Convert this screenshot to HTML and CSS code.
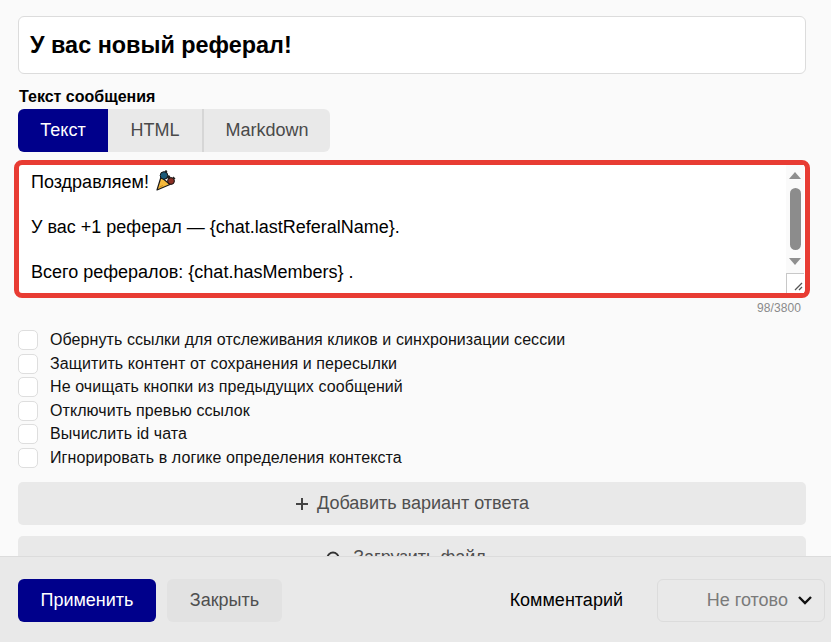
FILE: index.html
```html
<!DOCTYPE html>
<html>
<head>
    <title>Сообщение</title>
    <link rel="stylesheet" href="styles.css">
</head>
<body>
    <div class="page">
        <div class="content">
            <div class="title-box">У вас новый реферал!</div>

            <div class="field-label">Текст сообщения</div>
            <div class="tabs">
                <a href="#" class="tab tab-active">Текст</a>
                <a href="#" class="tab tab-html">HTML</a>
                <a href="#" class="tab tab-md">Markdown</a>
            </div>

            <div class="editor">
                <div class="editor-text">
                    <p>Поздравляем! <svg class="emoji" width="22" height="22" viewBox="0 0 22 22"><path d="M3 20 L7 7 L16 14.500 Z" fill="#f5b93c" stroke="#1a1a1a" stroke-width="1.200" stroke-linejoin="round"/><path d="M5.500 17 L9 15.500" stroke="#c98a1e" stroke-width="1"/><circle cx="10" cy="5.500" r="3.800" fill="#1c5a78" stroke="#111" stroke-width="1"/><circle cx="17" cy="11" r="3.400" fill="#8c2f24" stroke="#111" stroke-width="1"/><circle cx="14.500" cy="7" r="1.800" fill="#222"/><circle cx="12" cy="1.500" r="1.200" fill="#222"/><path d="M19 7 L21 9" stroke="#222" stroke-width="1.200"/></svg></p>
                    <p>У вас +1 реферал — {chat.lastReferalName}.</p>
                    <p>Всего рефералов: {chat.hasMembers} .</p>
                </div>
                <div class="scroll">
                    <div class="arrow-up"></div>
                    <div class="thumb"></div>
                    <div class="arrow-down"></div>
                    <div class="resizer">
                        <svg width="17" height="18" viewBox="0 0 17 18"><path d="M8 16 L15 9 M12 16 L15 13" stroke="#555" stroke-width="1.300" fill="none"/></svg>
                    </div>
                </div>
            </div>
            <div class="counter">98/3800</div>

            <div class="options">
                <label class="option"><span class="check"></span>Обернуть ссылки для отслеживания кликов и синхронизации сессии</label>
                <label class="option"><span class="check"></span>Защитить контент от сохранения и пересылки</label>
                <label class="option"><span class="check"></span>Не очищать кнопки из предыдущих сообщений</label>
                <label class="option"><span class="check"></span>Отключить превью ссылок</label>
                <label class="option"><span class="check"></span>Вычислить id чата</label>
                <label class="option"><span class="check"></span>Игнорировать в логике определения контекста</label>
            </div>

            <button class="wide-btn">
                <svg width="14" height="14" viewBox="0 0 14 14"><path d="M7 1 V13 M1 7 H13" stroke="#444" stroke-width="2"/></svg>
                Добавить вариант ответа
            </button>
            <button class="wide-btn wide-btn-upload">
                <svg width="14" height="14" viewBox="0 0 14 14"><circle cx="7" cy="7" r="5.500" stroke="#333" stroke-width="2" fill="none"/></svg>
                Загрузить файл
            </button>
        </div>

        <div class="footer">
            <button class="btn btn-primary">Применить</button>
            <button class="btn btn-close">Закрыть</button>
            <a href="#" class="comment">Комментарий</a>
            <div class="status">
                <span>Не готово</span>
                <svg width="16" height="11" viewBox="0 0 16 11"><path d="M2 2 L8 8 L14 2" stroke="#111" stroke-width="2.400" fill="none"/></svg>
            </div>
        </div>
    </div>
</body>
</html>
```

FILE: styles.css
```css
body {
    background-color: #fafafa;
    font-family: "Liberation Sans", Arial, sans-serif;
    margin: 0;
    color: #000;
}

.page {
    height: 642px;
    display: flex;
    flex-direction: column;
    overflow: hidden;
}

.content {
    flex: 1;
    min-height: 0;
    overflow: hidden;
    padding: 16px 25px 0 18px;
}

.title-box {
    height: 56px;
    line-height: 56px;
    padding-left: 11px;
    background-color: #fff;
    border: 1px solid #dcdcdc;
    border-radius: 6px;
    font-size: 23.400px;
    font-weight: bold;
}

.field-label {
    margin-top: 13px;
    padding-left: 1px;
    height: 19px;
    line-height: 19px;
    font-size: 16px;
    font-weight: bold;
}

.tabs {
    margin-top: 3px;
    display: flex;
    width: 312px;
    height: 43px;
    background-color: #e9e9e9;
    border-radius: 6px;
    overflow: hidden;
}

.tab {
    line-height: 43px;
    text-align: center;
    text-decoration: none;
    font-size: 18px;
    color: #4a4a4a;
}

.tab-active {
    width: 90px;
    background-color: #00008b;
    color: #fff;
}

.tab-html {
    width: 94px;
    border-right: 2px solid #d6d6d6;
}

.tab-md {
    flex: 1;
}

.editor {
    margin: 8px -4px 0 -4px;
    height: 128px;
    display: flex;
    background-color: #fff;
    border: 5px solid #e83c33;
    border-radius: 8px;
}

.editor-text {
    flex: 1;
    padding: 5px 0 0 12px;
    font-size: 18px;
}

.editor-text p {
    margin: 0 0 23.500px 0;
    height: 22px;
    line-height: 22px;
    white-space: nowrap;
}

.emoji {
    vertical-align: -4px;
}

.scroll {
    width: 18px;
    margin-right: 1px;
    display: flex;
    flex-direction: column;
    align-items: center;
    background-color: #fafafa;
}

.arrow-up {
    margin-top: 7px;
    border-left: 6.500px solid transparent;
    border-right: 6.500px solid transparent;
    border-bottom: 7px solid #8f8f8f;
}

.thumb {
    margin-top: 9px;
    width: 11px;
    height: 63px;
    background-color: #8c8c8c;
    border-radius: 6px;
}

.arrow-down {
    margin-top: 8px;
    border-left: 6.500px solid transparent;
    border-right: 6.500px solid transparent;
    border-top: 7px solid #8f8f8f;
}

.resizer {
    margin-top: 8px;
    width: 17px;
    height: 19px;
    background-color: #fff;
    border-top: 1px solid #c8c8c8;
    border-left: 1px solid #c8c8c8;
}

.resizer svg {
    display: block;
}

.counter {
    margin-top: 3px;
    padding-right: 5px;
    height: 14px;
    line-height: 14px;
    text-align: right;
    font-size: 12px;
    letter-spacing: 0.100px;
    color: #8a8a8a;
}

.options {
    margin-top: 13.500px;
}

.option {
    display: flex;
    align-items: center;
    height: 23.500px;
    font-size: 16px;
    letter-spacing: 0.080px;
    color: #111;
}

.check {
    width: 18px;
    height: 18px;
    margin-right: 12px;
    background-color: #fff;
    border: 1px solid #dedede;
    border-radius: 5px;
}

.wide-btn {
    display: flex;
    align-items: center;
    justify-content: center;
    gap: 8px;
    width: 100%;
    height: 43px;
    margin-top: 12.500px;
    padding: 0;
    border: none;
    border-radius: 5px;
    background-color: #e9e9e9;
    color: #4f4f4f;
    font-family: inherit;
    font-size: 18px;
}

.wide-btn + .wide-btn {
    margin-top: 11px;
}

.wide-btn-upload {
    gap: 13px;
    padding-right: 12px;
}

.footer {
    height: 84px;
    flex-shrink: 0;
    display: flex;
    align-items: center;
    padding: 1px 6px 0 18px;
    background-color: #e9e9e9;
    border-top: 1px solid #dcdcdc;
}

.btn {
    height: 43px;
    border: none;
    border-radius: 6px;
    font-family: inherit;
    font-size: 18px;
}

.btn-primary {
    width: 138px;
    background-color: #00008b;
    color: #fff;
}

.btn-close {
    width: 115px;
    margin-left: 11px;
    background-color: #e2e2e2;
    color: #4f4f4f;
}

.comment {
    margin-left: auto;
    margin-right: 34px;
    font-size: 18px;
    color: #000;
    text-decoration: none;
}

.status {
    width: 155px;
    height: 41px;
    display: flex;
    align-items: center;
    justify-content: flex-end;
    gap: 9px;
    padding-right: 11px;
    border: 1px solid #dcdcdc;
    border-radius: 6px;
    font-size: 18px;
    color: #7a7a7a;
}
```
